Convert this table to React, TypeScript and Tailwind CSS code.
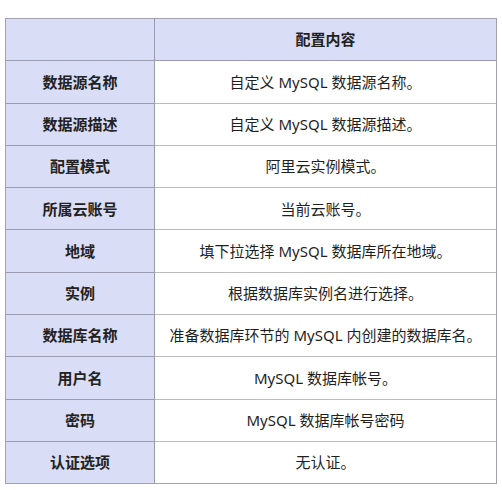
import React from "react";

const rows: [string, string][] = [
  ["数据源名称", "自定义 MySQL 数据源名称。"],
  ["数据源描述", "自定义 MySQL 数据源描述。"],
  ["配置模式", "阿里云实例模式。"],
  ["所属云账号", "当前云账号。"],
  ["地域", "填下拉选择 MySQL 数据库所在地域。"],
  ["实例", "根据数据库实例名进行选择。"],
  ["数据库名称", "准备数据库环节的 MySQL 内创建的数据库名。"],
  ["用户名", "MySQL 数据库帐号。"],
  ["密码", "MySQL 数据库帐号密码"],
  ["认证选项", "无认证。"],
];

export default function App() {
  return (
    <div
      className="w-[502px] h-[490px] bg-white pt-[18px] pl-[5px]"
      style={{ fontFamily: '"Noto Sans", "Noto Sans CJK SC", sans-serif' }}
    >
      <div className="w-[492px] border border-[#a2a2ae] text-[15px] text-[#222]">
        <div className="grid grid-cols-[149px_1fr] h-[42.3px] bg-[#d9ddf5] border-b border-[#9a9ab0]">
          <div className="border-r border-[#9a9ab0]"></div>
          <div className="flex items-center justify-center font-bold">配置内容</div>
        </div>
        {rows.map(([k, v], i) => (
          <div
            key={k}
            className={
              i === rows.length - 1
                ? "grid grid-cols-[149px_1fr] h-[41.3px]"
                : "grid grid-cols-[149px_1fr] h-[42.3px]"
            }
          >
            <div
              className={
                i === rows.length - 1
                  ? "bg-[#d9ddf5] border-r border-[#9a9ab0] flex items-center justify-center font-bold"
                  : "bg-[#d9ddf5] border-r border-b border-[#9a9ab0] flex items-center justify-center font-bold"
              }
            >
              {k}
            </div>
            <div
              className={
                i === rows.length - 1
                  ? "flex items-center justify-center text-[#1f1f1f]"
                  : "flex items-center justify-center border-b border-[#bcbcbc] text-[#1f1f1f]"
              }
            >
              {v}
            </div>
          </div>
        ))}
      </div>
    </div>
  );
}
